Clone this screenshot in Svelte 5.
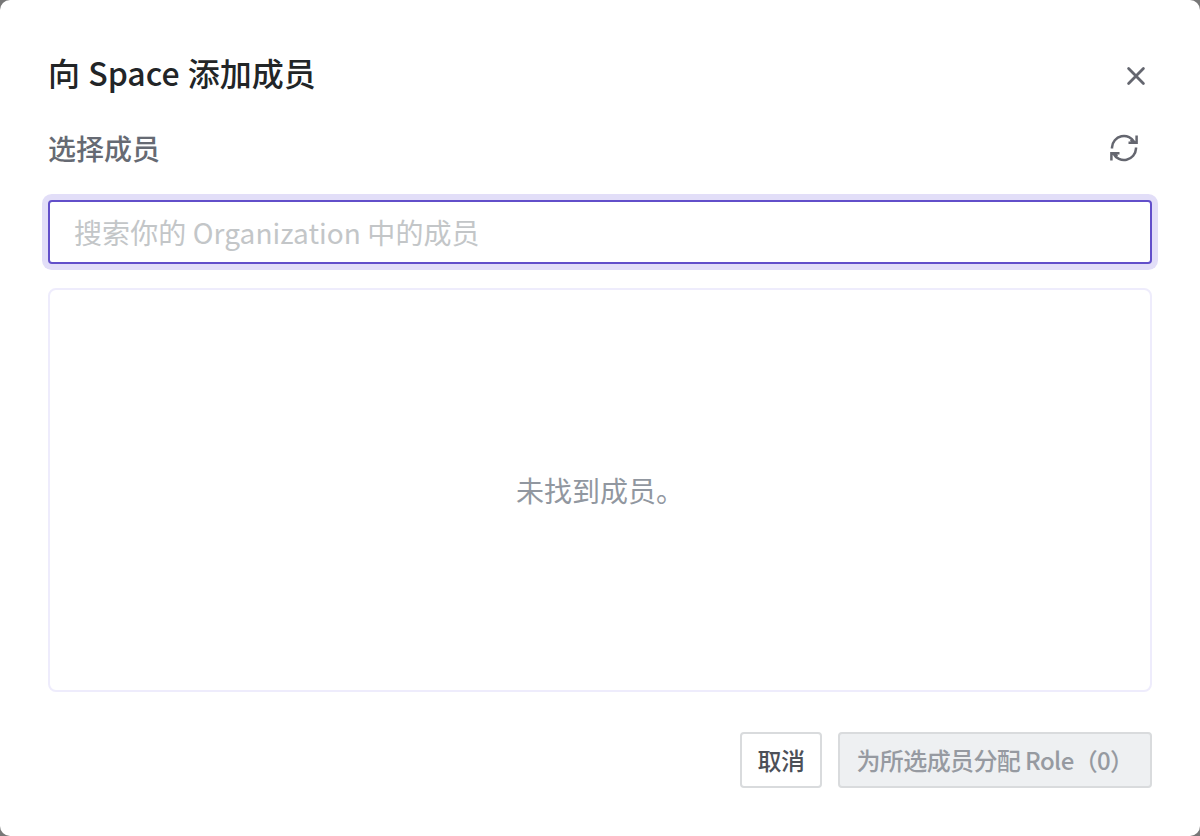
<script>
  let query = $state('');
</script>

<div class="dialog" role="dialog" aria-labelledby="title">
  <header>
    <h1 id="title">向 Space 添加成员</h1>
    <button class="close" aria-label="关闭">
      <svg width="20" height="20" viewBox="0 0 20 20"><path d="M2.6 2.6 17.4 17.4M17.4 2.6 2.6 17.4" /></svg>
    </button>
  </header>
  <div class="label">
    <h2>选择成员</h2>
    <button class="refresh" aria-label="刷新">
      <svg width="32" height="32" viewBox="0 0 32 32"><path d="M4 16.6V15.4A12 12 0 0 1 26.6 10.4M28.6 3.6V10.8H20.5M28 15.4V16.6A12 12 0 0 1 5.4 21.6M3.4 28.4V21.2H11.5M26.8 10.8 22.7 7.8M5.2 21.2 9.3 24.2" /></svg>
    </button>
  </div>
  <input bind:value={query} placeholder="搜索你的 Organization 中的成员" />
  <main>未找到成员。</main>
  <footer>
    <button class="cancel">取消</button>
    <button class="assign" disabled>为所选成员分配 Role（0）</button>
  </footer>
</div>

<style>
  :global(body) { background: #777; }
  * { box-sizing: border-box; }
  .dialog { height: 836px; padding: 48px; display: flex; flex-direction: column; background: #fff; border-radius: 10px; font-family: "Noto Sans CJK SC", sans-serif; }
  header, .label { display: flex; align-items: center; justify-content: space-between; }
  header { height: 56px; }
  h1, h2 { margin: 0; font-weight: 500; }
  h1 { font-size: 32px; line-height: 48px; padding-bottom: 8px; word-spacing: 1px; color: #222527; }
  h2 { font-size: 28px; line-height: 44px; color: #666a73; }
  button { font-family: inherit; }
  .close, .refresh { display: flex; padding: 0; border: 0; background: none; }
  .close { margin-right: 6px; }
  .refresh { margin-right: 12px; }
  svg { fill: none; stroke: #64666f; stroke-width: 2.5; }
  .close svg { stroke-width: 2.8; stroke-linecap: round; }
  .label { height: 44px; margin-top: 22px; }
  input { height: 64px; flex: none; margin: 30px 0 24px; padding: 0 24px; border: 2px solid #624fca; border-radius: 4px; box-shadow: 0 0 0 6px #e2def8; outline: none; font-family: inherit; font-size: 28px; letter-spacing: .08px; }
  input::placeholder { color: #c3c6c8; opacity: 1; }
  main { height: 404px; flex: none; border: 2px solid #eeecfc; border-radius: 8px; display: flex; align-items: center; justify-content: center; font-size: 28px; color: #9197a0; }
  footer { display: flex; justify-content: flex-end; gap: 16px; margin-top: 40px; }
  footer button { height: 56px; padding: 0 0 2px; border: 2px solid #d9dbdd; border-radius: 4px; font-size: 24px; font-weight: 500; letter-spacing: -.6px; white-space: nowrap; }
  .cancel { width: 82px; background: #fff; color: #4c5058; }
  .assign { width: 314px; background: #eef0f2; color: #969aa1; }
</style>
